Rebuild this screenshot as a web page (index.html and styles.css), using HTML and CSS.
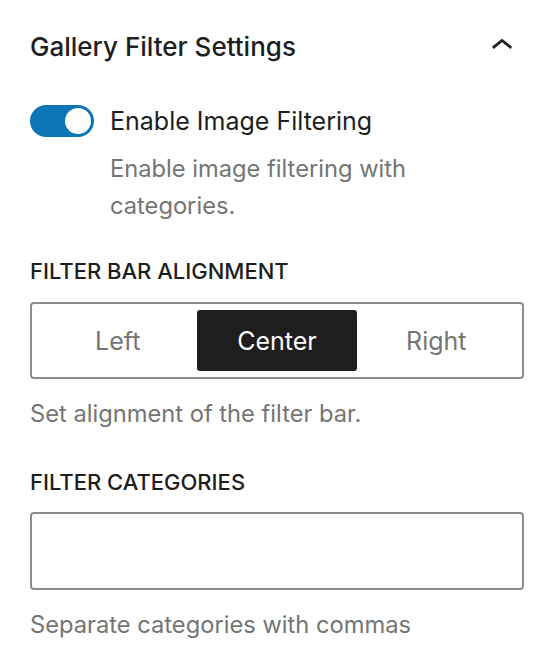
FILE: index.html
```html
<!DOCTYPE html>
<html>
<head>
  <meta charset="UTF-8">
  <title>Gallery Filter Settings</title>
  <link rel="stylesheet" href="styles.css">
</head>
<body>
  <div class="panel">
    <div class="panel-header">
      <h2 class="panel-title">Gallery Filter Settings</h2>
      <svg class="chevron" viewBox="0 0 24 24" xmlns="http://www.w3.org/2000/svg">
        <path d="M6.5 12.4L12 8l5.5 4.4-.9 1.2L12 10l-4.5 3.6-1-1.2z" fill="currentColor"/>
      </svg>
    </div>

    <div class="toggle-row">
      <span class="toggle is-checked"><span class="toggle-thumb"></span></span>
      <span class="toggle-label">Enable Image Filtering</span>
    </div>
    <p class="help toggle-help">Enable image filtering with categories.</p>

    <div class="field">
      <div class="field-label">Filter Bar Alignment</div>
      <div class="segmented">
        <div class="segment">Left</div>
        <div class="segment is-active">Center</div>
        <div class="segment">Right</div>
      </div>
      <p class="help">Set alignment of the filter bar.</p>
    </div>

    <div class="field">
      <div class="field-label">Filter Categories</div>
      <input class="text-input" type="text">
      <p class="help">Separate categories with commas</p>
    </div>
  </div>
</body>
</html>
```

FILE: styles.css
```css
body {
  margin: 0;
  background-color: #fff;
  font-family: Inter, 'Noto Sans', sans-serif;
  color: #1e1e1e;
}
.panel {
  padding: 0 32px 0 30px;
}
.panel-header {
  display: flex;
  align-items: center;
  justify-content: space-between;
  height: 92px;
}
.panel-title {
  margin: 0;
  font-size: 26px;
  font-weight: 500;
}
.chevron {
  width: 44px;
  height: 44px;
  color: #1e1e1e;
}
.toggle-row {
  display: flex;
  align-items: center;
  gap: 16px;
  height: 32px;
  margin-top: 13px;
}
.toggle {
  width: 64px;
  height: 32px;
  border-radius: 16px;
  background-color: #0b75b8;
  display: flex;
  align-items: center;
  justify-content: flex-end;
  padding: 0 3px;
  box-sizing: border-box;
}
.toggle-thumb {
  width: 26px;
  height: 26px;
  border-radius: 50%;
  background-color: #fff;
}
.toggle-label {
  font-size: 25px;
}
.help {
  margin: 16px 0 0;
  font-size: 23.7px;
  line-height: 37px;
  color: #757575;
}
.toggle-help {
  margin: 13px 0 0 80px;
}
.field {
  margin-top: 33px;
}
.field + .field {
  margin-top: 36px;
}
.field-label {
  font-size: 22px;
  font-weight: 500;
  line-height: 28px;
  text-transform: uppercase;
}
.segmented {
  display: flex;
  margin-top: 17px;
  height: 77px;
  padding: 6px;
  border: 2px solid #8c8c8c;
  border-radius: 4px;
  box-sizing: border-box;
}
.segment {
  flex: 1;
  display: flex;
  align-items: center;
  justify-content: center;
  border-radius: 3px;
  font-size: 25px;
  color: #757575;
}
.segment.is-active {
  background-color: #1e1e1e;
  color: #fff;
}
.text-input {
  display: block;
  width: 100%;
  height: 78px;
  margin-top: 16px;
  border: 2px solid #8c8c8c;
  border-radius: 4px;
  box-sizing: border-box;
}
```
